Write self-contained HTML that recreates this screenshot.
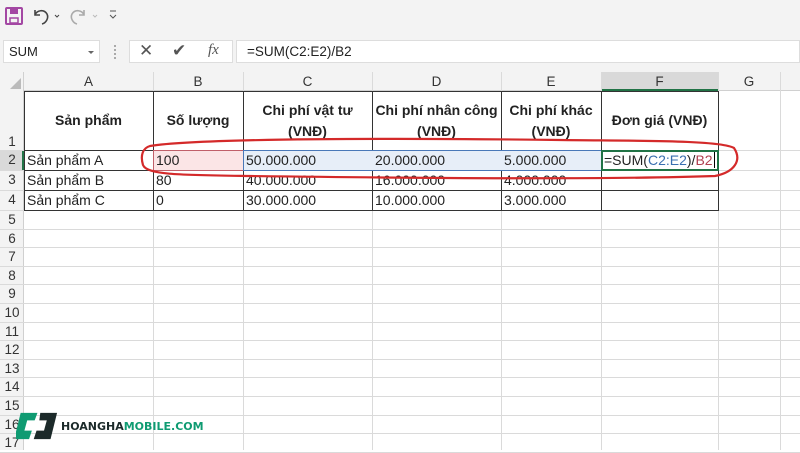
<!DOCTYPE html>
<html><head><meta charset="utf-8"><style>
*{margin:0;padding:0;box-sizing:border-box}
body{width:800px;height:450px;overflow:hidden;background:#fff;font-family:"Liberation Sans",sans-serif;position:relative}
.a{position:absolute}
.t{position:absolute;color:#222;white-space:nowrap;font-family:"Liberation Sans",sans-serif;font-size:14px}
.h{font-weight:bold;text-align:center;font-size:14px}
.rh{position:absolute;left:0;width:24px;text-align:center;font-size:13.5px;color:#333;font-family:"Liberation Sans",sans-serif}
.ch{position:absolute;top:72px;height:19px;text-align:center;font-size:13.5px;color:#333;line-height:19px;font-family:"Liberation Sans",sans-serif}
</style></head><body>
<div class="a" style="left:0;top:0;width:800px;height:32px;background:#f3f3f3"></div>
<div class="a" style="left:0;top:32px;width:800px;height:40px;background:#f3f3f3"></div>
<svg class="a" style="left:5px;top:7px" width="18" height="18" viewBox="0 0 18 18"><rect x="1" y="1" width="16" height="16" rx="1" fill="none" stroke="#a347a3" stroke-width="2"/><rect x="5" y="2" width="8" height="5" fill="#a347a3"/><rect x="5" y="11" width="8" height="5" fill="none" stroke="#a347a3" stroke-width="1.5"/></svg>
<svg class="a" style="left:32px;top:7px" width="90" height="18" viewBox="0 0 90 18"><path d="M3 3v5h5M3 8C5 3 12 2 15 7c2 4-1 9-5 10" fill="none" stroke="#444" stroke-width="1.6"/><path d="M23 8l2 2 2-2" fill="none" stroke="#444" stroke-width="1"/><path d="M52 3v5h-5M52 8C50 3 43 2 40 7c-2 4 1 9 5 10" fill="none" stroke="#aaa" stroke-width="1.6"/><path d="M61 8l2 2 2-2" fill="none" stroke="#bbb" stroke-width="1"/><path d="M78 4h6M78 8l3 3 3-3" fill="none" stroke="#555"/></svg>
<div class="a" style="left:3px;top:40px;width:97px;height:23px;background:#fff;border:1px solid #ddd"></div>
<div class="t" style="left:9px;top:44px;font-size:13px">SUM</div>
<div class="a" style="left:88px;top:51px;border:3px solid transparent;border-top:3px solid #666"></div>
<div class="a" style="left:114px;top:45px;width:2px;height:14px;border-left:2px dotted #aaa"></div>
<div class="a" style="left:129px;top:40px;width:104px;height:23px;background:#fff;border:1px solid #ddd"></div>
<div class="t" style="left:139px;top:41px;font-size:17px;color:#555">✕</div>
<div class="t" style="left:172px;top:41px;font-size:17px;color:#555">✔</div>
<div class="t" style="left:208px;top:42px;font-size:15px;color:#555;font-style:italic;font-family:'Liberation Serif',serif">fx</div>
<div class="a" style="left:236px;top:40px;width:564px;height:23px;background:#fff;border:1px solid #ddd"></div>
<div class="t" style="left:247px;top:44px;font-size:13.5px">=SUM(C2:E2)/B2</div>
<div class="a" style="left:0;top:72px;width:800px;height:19px;background:#f3f3f3;border-bottom:1px solid #d0d0d0"></div>
<div class="a" style="left:601px;top:72px;width:117px;height:19px;background:#d9d9d9;border-bottom:2px solid #217346"></div>
<div class="a" style="left:0;top:72px;width:24px;height:378px;background:#f3f3f3;border-right:1px solid #d0d0d0"></div>
<div class="a" style="left:0;top:150px;width:24px;height:20px;background:#d9d9d9;border-right:2px solid #217346"></div>
<svg class="a" style="left:8px;top:76px" width="14" height="14"><path d="M13 2V13H2Z" fill="#bbb"/></svg>
<div id="g"></div>
<div class="a" style="left:154px;top:151px;width:89px;height:19px;background:#fbe5e6"></div>
<div class="a" style="left:244px;top:151px;width:357px;height:19px;background:#e7eef8"></div>
<div class="a" style="left:153px;top:150px;width:91px;height:21px;border:1px solid #c0606a"></div>
<div class="a" style="left:243px;top:150px;width:359px;height:21px;border:1px solid #4a78b8"></div>
<div class="a" style="left:601px;top:150px;width:118px;height:21px;border:2px solid #217346"></div>
<div class="t h" style="left:24px;top:112px;width:129px">Sản phẩm</div>
<div class="t h" style="left:153px;top:112px;width:90px">Số lượng</div>
<div class="t h" style="left:243px;top:100px;width:129px;line-height:21px">Chi phí vật tư<br>(VNĐ)</div>
<div class="t h" style="left:372px;top:100px;width:129px;line-height:21px">Chi phí nhân công<br>(VNĐ)</div>
<div class="t h" style="left:501px;top:100px;width:100px;line-height:21px">Chi phí khác<br>(VNĐ)</div>
<div class="t h" style="left:601px;top:112px;width:117px">Đơn giá (VNĐ)</div>
<div class="t" style="left:27px;top:152px">Sản phẩm A</div>
<div class="t" style="left:27px;top:172px">Sản phẩm B</div>
<div class="t" style="left:27px;top:192px">Sản phẩm C</div>
<div class="t" style="left:156px;top:152px">100</div><div class="t" style="left:156px;top:172px">80</div><div class="t" style="left:156px;top:192px">0</div>
<div class="t" style="left:246px;top:152px">50.000.000</div><div class="t" style="left:246px;top:172px">40.000.000</div><div class="t" style="left:246px;top:192px">30.000.000</div>
<div class="t" style="left:375px;top:152px">20.000.000</div><div class="t" style="left:375px;top:172px">16.000.000</div><div class="t" style="left:375px;top:192px">10.000.000</div>
<div class="t" style="left:504px;top:152px">5.000.000</div><div class="t" style="left:504px;top:172px">4.000.000</div><div class="t" style="left:504px;top:192px">3.000.000</div>
<div class="t" style="left:604px;top:152px">=SUM(<span style="color:#3a6fb0">C2:E2</span>)/<span style="color:#b04050">B2</span><span style="border-left:1px solid #000;margin-left:1px"></span></div>
<svg class="a" style="left:0;top:0" width="800" height="450"><path d="M150 146 C200 138 400 138 560 140 C640 141 720 140 734 148 C742 160 735 172 715 176 C600 180 400 178 250 176 C180 175 147 175 143 165 C140 155 143 148 150 146Z" fill="none" stroke="#d42a2a" stroke-width="2.2"/></svg>
<svg class="a" style="left:16px;top:412px" width="42" height="28" viewBox="0 0 45 30"><path d="M5 1h18l-3 8h-8l-3 11h8l-3 9H-2Z" fill="#0f9b72"/><path d="M26 1h18l-7 28H19l3-9h8l3-11h-8Z" fill="#1c2a2a"/></svg>
<div class="a" style="left:61px;top:420px;font-size:11px;font-weight:bold;font-family:'DejaVu Sans',sans-serif;color:#1c2a2a">HOANGHA<span style="color:#0f9b72">MOBILE.COM</span></div>
<script>
var g=document.getElementById('g'),h='';
var cols=[24,153,243,372,501,601,718,780];
var ch=['A','B','C','D','E','F','G'];
for(var i=0;i<7;i++){h+='<div class="ch" style="left:'+cols[i]+'px;width:'+(cols[i+1]-cols[i])+'px">'+ch[i]+'</div>';}
for(var i=1;i<cols.length;i++)h+='<div class="a" style="left:'+cols[i]+'px;top:72px;width:1px;height:378px;background:#dadada"></div>';
var rows=[[91,150],[150,170],[170,190],[190,210]];var y=210;for(var r=5;r<=17;r++){rows.push([y,y+18.6]);y+=18.6;}
for(var r=0;r<rows.length;r++){var a=rows[r][0],b=rows[r][1];
h+='<div class="a" style="left:0;top:'+b+'px;width:800px;height:1px;background:#dadada"></div>';
h+='<div class="rh" style="top:'+(r==0?b-16:a+2)+'px">'+(r+1)+'</div>';}
for(var i=0;i<7;i++)h+='<div class="a" style="left:'+cols[i]+'px;top:91px;width:1px;height:120px;background:#333"></div>';
[91,150,170,190,210].forEach(function(v){h+='<div class="a" style="left:24px;top:'+v+'px;width:695px;height:1px;background:#333"></div>';});
g.innerHTML=h;
</script>
</body></html>
